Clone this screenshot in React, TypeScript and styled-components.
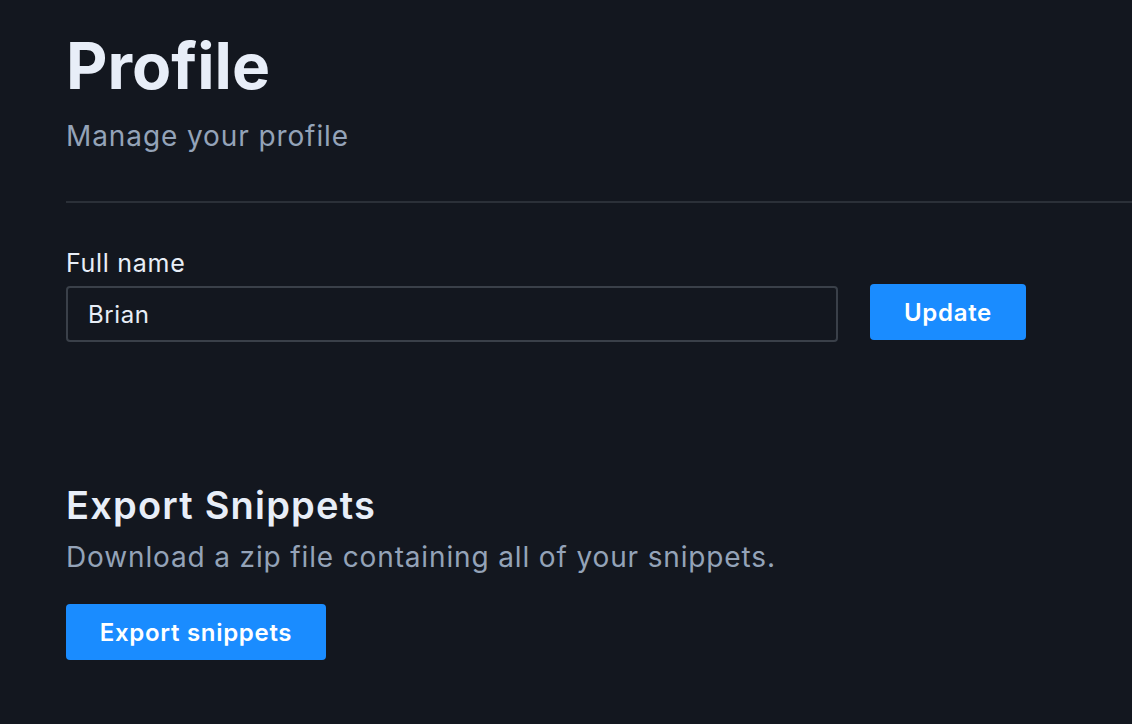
import styled, { createGlobalStyle } from "styled-components";

const GlobalStyle = createGlobalStyle`
  html, body {
    margin: 0;
    background: #13171f;
    font-family: Inter, "Noto Sans", sans-serif;
    overflow: hidden;
  }
`;

const App = () => {
  return (
    <>
      <GlobalStyle />
      <Page>
        <Header>
          <Title>Profile</Title>
          <SubTitle>Manage your profile</SubTitle>
        </Header>
        <Divider />
        <Field>
          <Label htmlFor="full-name">Full name</Label>
          <FormRow>
            <NameInput id="full-name" defaultValue="Brian" />
            <Button $width={156}>Update</Button>
          </FormRow>
        </Field>
        <Section>
          <SectionTitle>Export Snippets</SectionTitle>
          <SectionText>Download a zip file containing all of your snippets.</SectionText>
          <Button $width={260}>Export snippets</Button>
        </Section>
      </Page>
    </>
  );
};

export default App;

const Page = styled.main`
  width: 1132px;
  padding: 28px 0 0 66px;
  box-sizing: border-box;
  color: #e8eef7;
`;

const Header = styled.header`
  display: flex;
  flex-direction: column;
`;

const Title = styled.h1`
  margin: 0;
  font-size: 64px;
  line-height: 76px;
  font-weight: 700;
  color: #e8eef8;
`;

const SubTitle = styled.p`
  margin: 14px 0 0;
  font-size: 28px;
  line-height: 36px;
  letter-spacing: 0.9px;
  color: #94a3b8;
`;

const Divider = styled.hr`
  margin: 47px 0 0;
  border: none;
  border-top: 2px solid #2b3038;
`;

const Field = styled.div`
  display: flex;
  flex-direction: column;
  gap: 6px;
  margin-top: 45px;
`;

const Label = styled.label`
  font-size: 25px;
  line-height: 30px;
  font-weight: 400;
  letter-spacing: 0.7px;
  color: #e8eef7;
`;

const FormRow = styled.div`
  display: flex;
  align-items: flex-start;
  gap: 32px;
`;

const NameInput = styled.input`
  width: 772px;
  height: 56px;
  margin-top: 2px;
  box-sizing: border-box;
  padding: 0 20px;
  background: #13171f;
  border: 2px solid #3a4049;
  border-radius: 4px;
  color: #e8eef7;
  font-family: Inter, "Noto Sans", sans-serif;
  font-size: 24px;
  letter-spacing: 0.6px;
  outline: none;
`;

const Button = styled.button<{ $width: number }>`
  width: ${({ $width }) => $width}px;
  height: 56px;
  border: none;
  border-radius: 4px;
  background: #1a8cff;
  color: #ffffff;
  font-family: Inter, "Noto Sans", sans-serif;
  font-size: 24px;
  font-weight: 600;
  letter-spacing: 0.7px;
  cursor: pointer;
`;

const Section = styled.section`
  display: flex;
  flex-direction: column;
  align-items: flex-start;
  margin-top: 140px;
`;

const SectionTitle = styled.h2`
  margin: 0;
  font-size: 38px;
  line-height: 46px;
  font-weight: 600;
  letter-spacing: 1.2px;
  color: #e8eef8;
`;

const SectionText = styled.p`
  margin: 11px 0 29px;
  font-size: 28px;
  line-height: 36px;
  letter-spacing: 0.86px;
  color: #94a3b8;
`;
